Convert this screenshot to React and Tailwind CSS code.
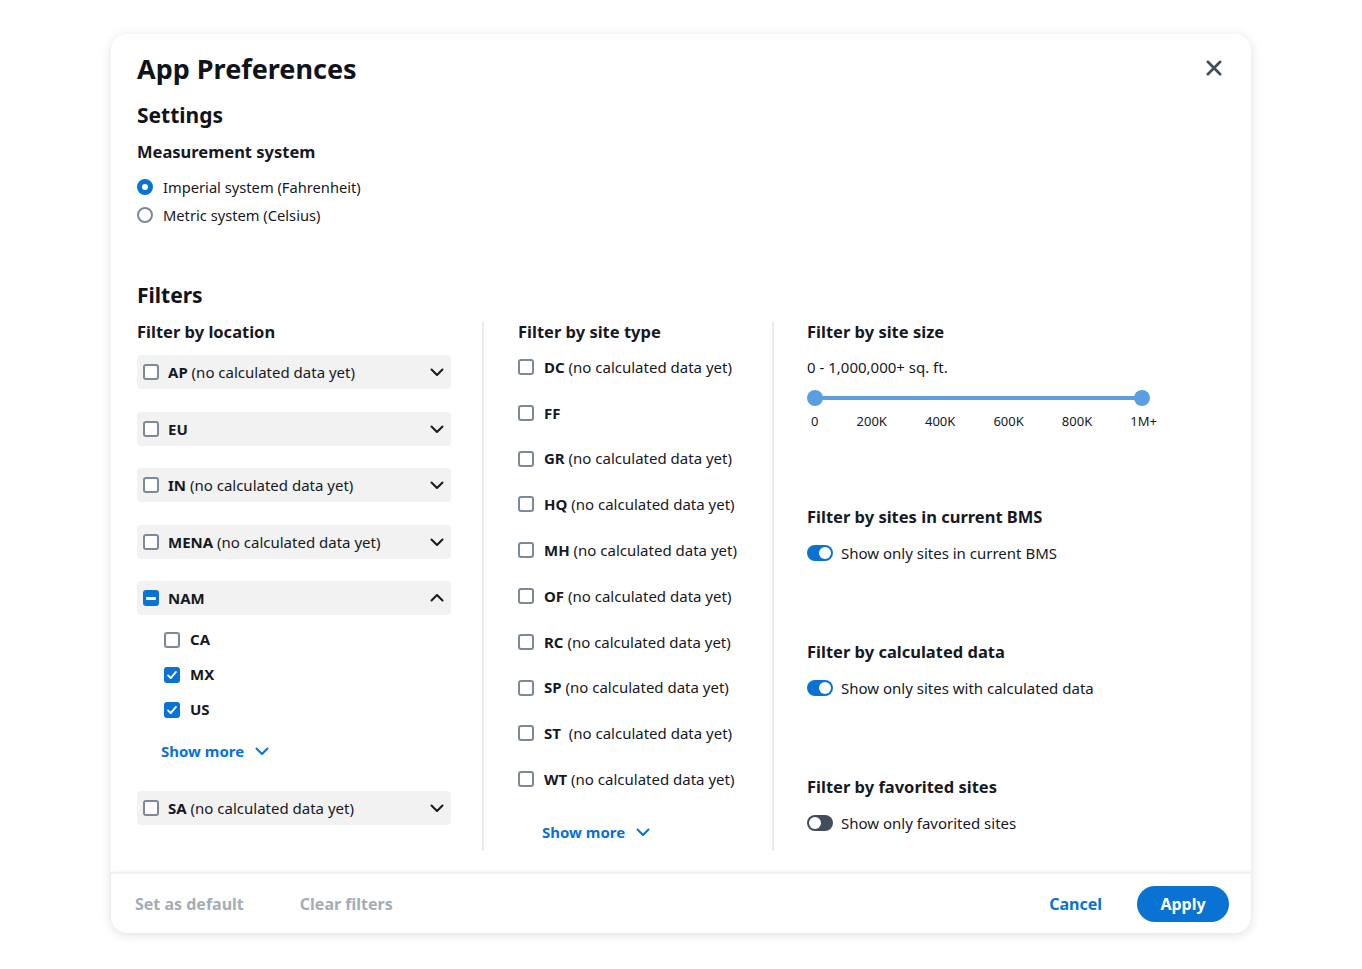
import {useState} from "react";

const font = {fontFamily: '"Noto Sans", "Open Sans", Arial, sans-serif'};

function Chevron({up, className = "w-4 h-4 text-[#16191f]"}) {
  return (
    <svg viewBox="0 0 16 16" fill="none" stroke="currentColor" strokeWidth={2} strokeLinecap="round" strokeLinejoin="round" className={className}>
      {up ? <path d="M2.5 10.5 8 5l5.5 5.5" /> : <path d="M2.5 5.5 8 11l5.5-5.5" />}
    </svg>
  );
}

function Checkbox({state}) {
  if (state === "checked") {
    return (
      <span className="w-4 h-4 rounded-[3px] bg-[#0972d3] flex items-center justify-center shrink-0">
        <svg viewBox="0 0 16 16" fill="none" stroke="white" strokeWidth={2.2} strokeLinecap="round" strokeLinejoin="round" className="w-3.5 h-3.5">
          <path d="M3.5 8.5 6.5 11.5 12.5 4.5" />
        </svg>
      </span>
    );
  }
  if (state === "mixed") {
    return (
      <span className="w-4 h-4 rounded-[3px] bg-[#0972d3] flex items-center justify-center shrink-0">
        <span className="w-[10px] h-[3px] bg-white rounded-[1px]" />
      </span>
    );
  }
  return <span className="w-4 h-4 rounded-[3px] border-2 border-[#7d8998] bg-white shrink-0" />;
}

function Radio({on, label}) {
  return (
    <label className="flex items-center gap-[10px] h-[28px] text-[14.7px] text-[#16191f]">
      {on ? (
        <span className="w-4 h-4 rounded-full border-[5px] border-[#0972d3] bg-white" />
      ) : (
        <span className="w-4 h-4 rounded-full border-2 border-[#7d8998] bg-white" />
      )}
      {label}
    </label>
  );
}

function Label({code, note}) {
  return (
    <span className="text-[15px] text-[#16191f] whitespace-nowrap">
      <b className="font-bold">{code}</b>
      {note && <span> {note}</span>}
    </span>
  );
}

function Toggle({on, label}) {
  return (
    <div className="flex items-center gap-[8px] h-[22px]">
      <span className={`w-[26px] h-[16px] rounded-full flex items-center px-[2px] ${on ? "bg-[#0972d3] justify-end" : "bg-[#414d5c] justify-start"}`}>
        <span className="w-[12px] h-[12px] rounded-full bg-white" />
      </span>
      <span className="text-[15px] text-[#16191f]">{label}</span>
    </div>
  );
}

function ShowMore() {
  return (
    <button className="flex items-center gap-[10px] text-[15px] font-bold text-[#0972d3] h-[22px]">
      Show more
      <Chevron className="w-4 h-4 text-[#0972d3]" />
    </button>
  );
}

const locations = [
  {code: "AP", note: "(no calculated data yet)"},
  {code: "EU"},
  {code: "IN", note: "(no calculated data yet)"},
  {code: "MENA", note: "(no calculated data yet)"},
];

const siteTypes = [
  ["DC", "(no calculated data yet)"],
  ["FF", null],
  ["GR", "(no calculated data yet)"],
  ["HQ", "(no calculated data yet)"],
  ["MH", "(no calculated data yet)"],
  ["OF", "(no calculated data yet)"],
  ["RC", "(no calculated data yet)"],
  ["SP", "(no calculated data yet)"],
  ["ST", " (no calculated data yet)"],
  ["WT", "(no calculated data yet)"],
];

function AccordionRow({code, note, state, open}) {
  return (
    <div className="h-[34px] bg-[#f2f2f2] rounded-[4px] flex items-center pl-[6px] pr-[6px] gap-[9px]">
      <Checkbox state={state} />
      <div className="flex-1"><Label code={code} note={note} /></div>
      <Chevron up={open} />
    </div>
  );
}

export default function App() {
  const [metric, setMetric] = useState(false);
  return (
    <div className="min-h-screen bg-white pt-[34px]" style={font}>
      <div className="w-[1140px] mx-auto bg-white rounded-[16px] shadow-[0_2px_12px_rgba(0,0,0,0.12)] relative">
        <div className="px-[26px] pt-[18px]">
          <button className="absolute right-[28px] top-[25px] text-[#414d5c]">
            <svg viewBox="0 0 16 16" fill="none" stroke="currentColor" strokeWidth={2.4} strokeLinecap="round" className="w-[18px] h-[18px]">
              <path d="M2.5 2.5l11 11M13.5 2.5l-11 11" />
            </svg>
          </button>
          <h1 className="text-[27px] leading-[34px] font-bold text-[#0f141a]">App Preferences</h1>
          <h2 className="mt-[15px] text-[21px] leading-[28px] font-bold text-[#0f141a]">Settings</h2>
          <h3 className="mt-[12px] text-[16.5px] leading-[22px] font-bold text-[#16191f]">Measurement system</h3>
          <div className="mt-[10px]" onClick={() => setMetric(!metric)}>
            <Radio on={!metric} label="Imperial system (Fahrenheit)" />
            <Radio on={metric} label="Metric system (Celsius)" />
          </div>
          <h2 className="mt-[52px] text-[21px] leading-[28px] font-bold text-[#0f141a]">Filters</h2>

          <div className="mt-[12px] flex h-[530px]">
            {/* location */}
            <div className="w-[347px] border-r-2 border-[#e9ebed] pr-[31px]">
              <h3 className="text-[16.5px] leading-[22px] font-bold text-[#16191f]">Filter by location</h3>
              <div className="mt-[12px] flex flex-col gap-[22.5px]">
                {locations.map(l => (
                  <AccordionRow key={l.code} code={l.code} note={l.note} state="off" />
                ))}
                <div>
                  <AccordionRow code="NAM" state="mixed" open />
                  <div className="pl-[27px] pt-[7px] pb-[6px]">
                    {[["CA", "off"], ["MX", "checked"], ["US", "checked"]].map(([c, s]) => (
                      <div key={c} className="h-[35px] flex items-center gap-[10px]">
                        <Checkbox state={s} />
                        <Label code={c} />
                      </div>
                    ))}
                    <div className="mt-[13px] -ml-[3px]"><ShowMore /></div>
                  </div>
                </div>
                <AccordionRow code="SA" note="(no calculated data yet)" state="off" />
              </div>
            </div>

            {/* site type */}
            <div className="w-[290px] border-r-2 border-[#e9ebed] pl-[34px]">
              <h3 className="text-[16.5px] leading-[22px] font-bold text-[#16191f]">Filter by site type</h3>
              <div className="mt-[13px] flex flex-col gap-[23.8px]">
                {siteTypes.map(([c, n]) => (
                  <div key={c} className="h-[22px] flex items-center gap-[10px]">
                    <Checkbox state="off" />
                    <span className="text-[15px] text-[#16191f] whitespace-pre">
                      <b>{c}</b>{n ? " " + n : ""}
                    </span>
                  </div>
                ))}
              </div>
              <div className="mt-[31px] pl-[24px]"><ShowMore /></div>
            </div>

            {/* right */}
            <div className="flex-1 pl-[33px]">
              <h3 className="text-[16.5px] leading-[22px] font-bold text-[#16191f]">Filter by site size</h3>
              <p className="mt-[13px] text-[15px] leading-[22px] text-[#16191f]">0 - 1,000,000+ sq. ft.</p>
              <div className="mt-[12px] relative w-[343px] h-[16px]">
                <div className="absolute left-[7px] right-[7px] top-[6px] h-[4px] rounded-full bg-[#5b9fe3]" />
                <span className="absolute left-0 top-0 w-4 h-4 rounded-full bg-[#5b9fe3]" />
                <span className="absolute right-0 top-0 w-4 h-4 rounded-full bg-[#5b9fe3]" />
              </div>
              <div className="mt-[6px] w-[350px] pl-[4px] flex justify-between text-[13px] leading-[18px] text-[#16191f]">
                {["0", "200K", "400K", "600K", "800K", "1M+"].map(t => <span key={t}>{t}</span>)}
              </div>

              <h3 className="mt-[76px] text-[16.5px] leading-[22px] font-bold text-[#16191f]">Filter by sites in current BMS</h3>
              <div className="mt-[14px]"><Toggle on label="Show only sites in current BMS" /></div>

              <h3 className="mt-[77px] text-[16.5px] leading-[22px] font-bold text-[#16191f]">Filter by calculated data</h3>
              <div className="mt-[14px]"><Toggle on label="Show only sites with calculated data" /></div>

              <h3 className="mt-[77px] text-[16.5px] leading-[22px] font-bold text-[#16191f]">Filter by favorited sites</h3>
              <div className="mt-[14px]"><Toggle label="Show only favorited sites" /></div>
            </div>
          </div>
        </div>

        <div className="mt-[21px] h-[61px] border-t-2 border-[#eef0f2] shadow-[0_-1px_3px_rgba(0,0,0,0.05)] rounded-b-[16px] flex items-center pl-[24px] pr-[22px]">
          <button className="text-[16px] font-bold text-[#a4acb6]">Set as default</button>
          <button className="ml-[56px] text-[16px] font-bold text-[#a4acb6]">Clear filters</button>
          <div className="flex-1" />
          <button className="text-[16px] font-bold text-[#0972d3]">Cancel</button>
          <button className="ml-[35px] w-[92px] h-[36px] rounded-full bg-[#0972d3] text-white text-[16px] font-bold">Apply</button>
        </div>
      </div>
    </div>
  );
}
